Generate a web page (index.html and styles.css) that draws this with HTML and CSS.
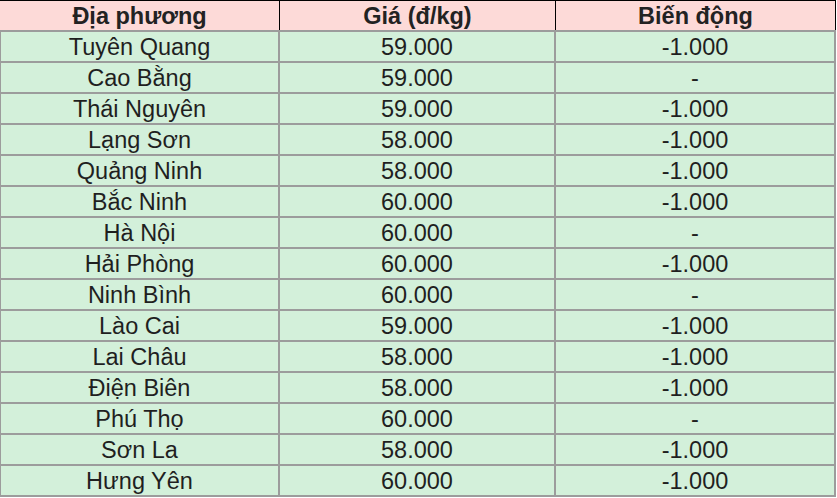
FILE: index.html
```html
<!DOCTYPE html>
<html>
<head>
<meta charset="utf-8">
<link rel="stylesheet" href="styles.css">
</head>
<body>
<div class="table">
  <div class="head">
    <div class="cell c1">Địa phương</div>
    <div class="cell c2">Giá (đ/kg)</div>
    <div class="cell c3">Biến động</div>
  </div>
  <div class="row"><div class="cell c1">Tuyên Quang</div><div class="cell c2">59.000</div><div class="cell c3">-1.000</div></div>
  <div class="row"><div class="cell c1">Cao Bằng</div><div class="cell c2">59.000</div><div class="cell c3">-</div></div>
  <div class="row"><div class="cell c1">Thái Nguyên</div><div class="cell c2">59.000</div><div class="cell c3">-1.000</div></div>
  <div class="row"><div class="cell c1">Lạng Sơn</div><div class="cell c2">58.000</div><div class="cell c3">-1.000</div></div>
  <div class="row"><div class="cell c1">Quảng Ninh</div><div class="cell c2">58.000</div><div class="cell c3">-1.000</div></div>
  <div class="row"><div class="cell c1">Bắc Ninh</div><div class="cell c2">60.000</div><div class="cell c3">-1.000</div></div>
  <div class="row"><div class="cell c1">Hà Nội</div><div class="cell c2">60.000</div><div class="cell c3">-</div></div>
  <div class="row"><div class="cell c1">Hải Phòng</div><div class="cell c2">60.000</div><div class="cell c3">-1.000</div></div>
  <div class="row"><div class="cell c1">Ninh Bình</div><div class="cell c2">60.000</div><div class="cell c3">-</div></div>
  <div class="row"><div class="cell c1">Lào Cai</div><div class="cell c2">59.000</div><div class="cell c3">-1.000</div></div>
  <div class="row"><div class="cell c1">Lai Châu</div><div class="cell c2">58.000</div><div class="cell c3">-1.000</div></div>
  <div class="row"><div class="cell c1">Điện Biên</div><div class="cell c2">58.000</div><div class="cell c3">-1.000</div></div>
  <div class="row"><div class="cell c1">Phú Thọ</div><div class="cell c2">60.000</div><div class="cell c3">-</div></div>
  <div class="row"><div class="cell c1">Sơn La</div><div class="cell c2">58.000</div><div class="cell c3">-1.000</div></div>
  <div class="row last"><div class="cell c1">Hưng Yên</div><div class="cell c2">60.000</div><div class="cell c3">-1.000</div></div>
</div>
</body>
</html>
```

FILE: styles.css
```css
html, body {
  margin: 0;
  padding: 0;
  background: #ffffff;
}
body {
  font-family: "Liberation Sans", Arial, sans-serif;
  color: #1f1f1f;
}
.table {
  width: 836px;
  display: flex;
  flex-direction: column;
}
.head {
  display: flex;
  height: 29px;
  background: #fddad8;
  border-top: 1px solid #000;
  border-right: 1px solid #000;
  font-weight: bold;
  font-size: 23.5px;
  color: #222;
}
.head .c1 { width: 279px; }
.head .c2 { width: 275px; border-left: 1px solid #000; }
.head .c3 { flex: 1; border-left: 1px solid #000; }
.row {
  display: flex;
  height: 29px;
  background: #d3f0da;
  border-top: 2px solid #9c9c9c;
  border-left: 1px solid #9c9c9c;
  border-right: 2px solid #9c9c9c;
  font-size: 23.5px;
}
.row.last {
  border-bottom: 2px solid #9c9c9c;
}
.row .c1 { width: 277px; }
.row .c2 { width: 274px; border-left: 2px solid #9c9c9c; }
.row .c3 { flex: 1; border-left: 2px solid #9c9c9c; }
.cell {
  display: flex;
  align-items: center;
  justify-content: center;
  line-height: 1;
  padding-top: 3px;
}
```
